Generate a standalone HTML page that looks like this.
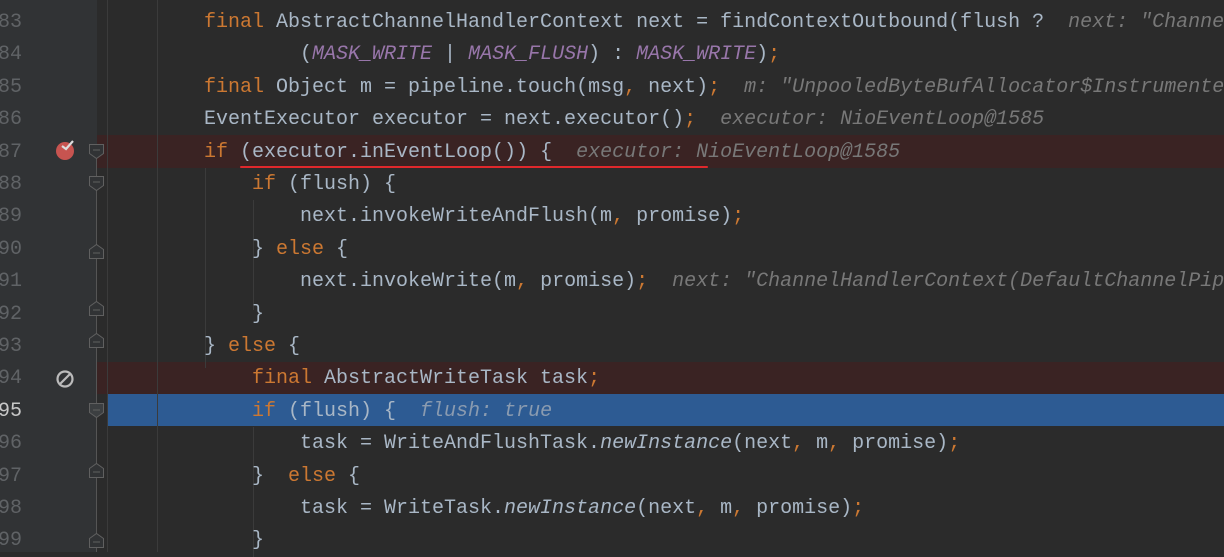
<!DOCTYPE html>
<html><head><style>
body{margin:0;width:1224px;height:552px;background:#2b2b2b;overflow:hidden;position:relative;font-family:"Liberation Mono",monospace;font-size:20px}
.g{position:absolute;left:0;top:0;width:97px;height:552px;background:#313335}
.row{position:absolute;left:0;width:1224px;height:32.4px;overflow:hidden}
.num{position:absolute;left:-4px;top:2px;width:26px;text-align:right;color:#606366;line-height:32.4px}
.code{position:absolute;top:2px;white-space:pre;line-height:32.4px;color:#a9b7c6}
.k{color:#cc7832}.c{color:#9876aa;font-style:italic}.h{color:#787878;font-style:italic}.i{font-style:italic}
.bp{background:#3a2323;left:97px;width:1127px}
.sel{background:#2d5b93;left:107px;width:1117px}
.guide{position:absolute;top:0;width:1px;height:552px;background:#3b3b3b}
</style></head><body>
<div class="g"></div>
<div class="row bp" style="top:135.2px;position:absolute"></div>
<div class="row bp" style="top:361.8px;position:absolute"></div>
<div class="row sel" style="top:393.8px;position:absolute"></div>
<div style="position:absolute;left:97px;top:393.8px;width:10px;height:32.4px;background:#2b2b2b"></div>
<div class="guide" style="left:107px"></div>
<div class="guide" style="left:157px"></div>
<div class="guide" style="left:205px;top:168px;height:200px"></div>
<div class="guide" style="left:253px;top:200px;height:110px"></div>
<div class="guide" style="left:253px;top:427px;height:130px"></div>
<div style="position:absolute;left:96px;top:150px;width:1px;height:402px;background:#555"></div>

<div class="row" style="top:5px"><span class="num">83</span><span class="code" style="left:204px"><span class="k">final</span> AbstractChannelHandlerContext next = findContextOutbound(flush ?  <span class="h">next: "Channe</span></span></div>
<div class="row" style="top:37.4px"><span class="num">84</span><span class="code" style="left:300px">(<span class="c">MASK_WRITE</span> | <span class="c">MASK_FLUSH</span>) : <span class="c">MASK_WRITE</span>)<span class="k">;</span></span></div>
<div class="row" style="top:69.8px"><span class="num">85</span><span class="code" style="left:204px"><span class="k">final</span> Object m = pipeline.touch(msg<span class="k">,</span> next)<span class="k">;</span>  <span class="h">m: "UnpooledByteBufAllocator$Instrumente</span></span></div>
<div class="row" style="top:102.2px"><span class="num">86</span><span class="code" style="left:204px">EventExecutor executor = next.executor()<span class="k">;</span>  <span class="h">executor: NioEventLoop@1585</span></span></div>
<div class="row" style="top:134.6px"><span class="num">87</span><span class="code" style="left:204px"><span class="k">if</span> (executor.inEventLoop()) {  <span class="h">executor: NioEventLoop@1585</span></span></div>
<div class="row" style="top:167px"><span class="num">88</span><span class="code" style="left:252px"><span class="k">if</span> (flush) {</span></div>
<div class="row" style="top:199.4px"><span class="num">89</span><span class="code" style="left:300px">next.invokeWriteAndFlush(m<span class="k">,</span> promise)<span class="k">;</span></span></div>
<div class="row" style="top:231.8px"><span class="num">90</span><span class="code" style="left:252px">} <span class="k">else</span> {</span></div>
<div class="row" style="top:264.2px"><span class="num">91</span><span class="code" style="left:300px">next.invokeWrite(m<span class="k">,</span> promise)<span class="k">;</span>  <span class="h">next: "ChannelHandlerContext(DefaultChannelPip</span></span></div>
<div class="row" style="top:296.6px"><span class="num">92</span><span class="code" style="left:252px">}</span></div>
<div class="row" style="top:329px"><span class="num">93</span><span class="code" style="left:204px">} <span class="k">else</span> {</span></div>
<div class="row" style="top:361.4px"><span class="num">94</span><span class="code" style="left:252px"><span class="k">final</span> AbstractWriteTask task<span class="k">;</span></span></div>
<div class="row" style="top:393.8px"><span class="num" style="color:#c8c8c8">95</span><span class="code" style="left:252px"><span class="k">if</span> (flush) {  <span class="h" style="color:#8a9bb0">flush: true</span></span></div>
<div class="row" style="top:426.2px"><span class="num">96</span><span class="code" style="left:300px">task = WriteAndFlushTask.<span class="i">newInstance</span>(next<span class="k">,</span> m<span class="k">,</span> promise)<span class="k">;</span></span></div>
<div class="row" style="top:458.6px"><span class="num">97</span><span class="code" style="left:252px">}  <span class="k">else</span> {</span></div>
<div class="row" style="top:491px"><span class="num">98</span><span class="code" style="left:300px">task = WriteTask.<span class="i">newInstance</span>(next<span class="k">,</span> m<span class="k">,</span> promise)<span class="k">;</span></span></div>
<div class="row" style="top:523.4px"><span class="num">99</span><span class="code" style="left:252px">}</span></div>

<div style="position:absolute;left:240px;top:166px;width:468px;height:2px;background:#e0282c;border-radius:1px"></div>
<div style="position:absolute;left:56px;top:142px;width:18px;height:18px;border-radius:50%;background:#c75450"></div>
<svg style="position:absolute;left:60px;top:138px" width="16" height="14"><path d="M2 8 L6 11 L13 3" stroke="#ddd" stroke-width="2.2" fill="none"/></svg>
<svg style="position:absolute;left:55px;top:369px" width="20" height="20"><circle cx="10" cy="10" r="7.5" stroke="#bbb" stroke-width="2.2" fill="none"/><path d="M5 15 L15 5" stroke="#bbb" stroke-width="2.2"/></svg>
<svg style="position:absolute;left:88px;top:0" width="18" height="552">
<g fill="#313335" stroke="#606060" stroke-width="1">
<path d="M1.5 144.5h14v9l-7 5l-7-5z"/><path d="M5 150h7"/>
<path d="M1.5 176.5h14v9l-7 5l-7-5z"/><path d="M5 182h7"/>
<path d="M1.5 249.5l7-5l7 5v9h-14z"/><path d="M5 253h7"/>
<path d="M1.5 306.5l7-5l7 5v9h-14z"/><path d="M5 310h7"/>
<path d="M1.5 338.5l7-5l7 5v9h-14z"/><path d="M5 342h7"/>
<path d="M1.5 403.5h14v9l-7 5l-7-5z" fill="#3c3f41"/><path d="M5 410h7"/>
<path d="M1.5 468.5l7-5l7 5v9h-14z"/><path d="M5 472h7"/>
<path d="M1.5 538.5l7-5l7 5v9h-14z"/><path d="M5 542h7"/>
</g></svg>
</body></html>
